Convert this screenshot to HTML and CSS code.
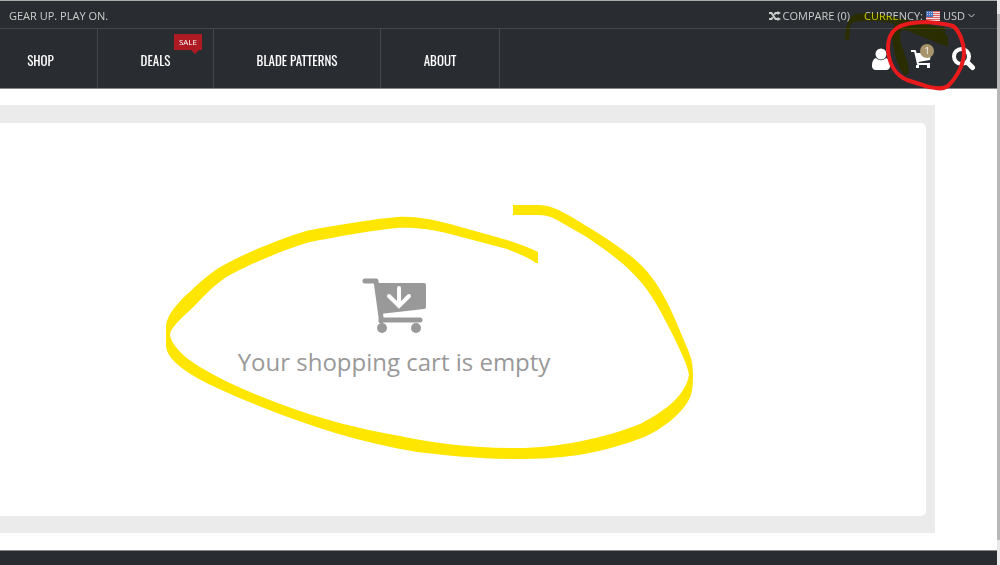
FILE: index.html
```html
<!DOCTYPE html>
<html lang="en">
<head>
  <meta charset="UTF-8">
  <meta name="viewport" content="width=device-width, initial-scale=1.0">
  <title>Shopping Cart</title>
  <link rel="stylesheet" href="styles.css">
</head>
<body>
  <div class="page">
    <header class="header">
      <div class="topbar">
        <span>GEAR UP. PLAY ON.</span>
        <div class="topbar-right">
          <a href="#" class="compare">
            <svg width="12" height="10" viewBox="0 0 12 10" fill="none" stroke="currentColor" stroke-width="2">
              <path d="M0 2h2.5l4 6H9M0 8h2.5l1.2-1.8M5.3 3.8L6.5 2H9"/>
              <path d="M8.5 0L12 2 8.500 4zM8.500 6L12 8l-3.500 2z" fill="currentColor" stroke="none"/>
            </svg>
            COMPARE (0)
          </a>
          <button type="button" class="currency">
            CURRENCY:
            <svg class="flag" width="14" height="10" viewBox="0 0 14 10">
              <path fill="#f2dede" d="M0 0h14v10H0z"/>
              <path stroke="#d8625f" d="M0 .5h14M0 2.500h14M0 4.500h14M0 6.500h14M0 8.500h14"/>
              <path fill="#4a72b8" d="M0 0h7v6H0z"/>
              <path stroke="#b9cbe8" stroke-dasharray="1 1" d="M1 1.500h5M1 3.500h5"/>
            </svg>
            USD
            <svg width="7" height="5" viewBox="0 0 7 5" fill="none" stroke="currentColor"><path d="M.5 1l3 3 3-3"/></svg>
          </button>
        </div>
      </div>

      <div class="navbar">
        <nav class="nav">
          <a href="#">SHOP</a>
          <a href="#">DEALS<span class="sale">SALE</span></a>
          <a href="#">BLADE PATTERNS</a>
          <a href="#">ABOUT</a>
        </nav>
        <div class="tools">
          <button type="button" aria-label="Account">
            <svg width="18" height="22" viewBox="0 0 18 22" fill="#fff">
              <path d="M4 10C1 11 0 14 0 18c0 2 1 4 4 4h10c3 0 4-2 4-4 0-4-1-7-4-8-3 3-7 3-10 0z"/>
              <circle cx="9" cy="6" r="5.500"/>
            </svg>
          </button>
          <button type="button" class="cart" aria-label="Cart">
            <svg width="20" height="20" viewBox="0 0 20 20">
              <path fill="none" stroke="#fff" stroke-width="2" stroke-linejoin="round" d="M0 2h4l3 13h12"/>
              <path fill="#fff" d="M4.500 4H20l-1 7-12 2z"/>
              <path fill="#fff" d="M5 16h3v3H5zM16 16h3v3h-3z"/>
            </svg>
            <span class="badge">1</span>
          </button>
          <button type="button" aria-label="Search">
            <svg width="24" height="24" viewBox="0 0 24 24" fill="none" stroke="#fff">
              <circle cx="9.500" cy="9.500" r="7.500" stroke-width="4"/>
              <path stroke-width="5" stroke-linecap="round" d="M16 16l4.500 4.500"/>
            </svg>
          </button>
        </div>
      </div>

      <svg class="marker" width="157" height="100" viewBox="840 0 157 100">
        <path fill="#ff0" d="M845 40c0-10 2-19 7-24 6-4 18-3 28-2l65 14v6l3 2v11l-45-18c-5 4-3 13 1 23 2 7 5 14 5 20l-3 4c-8-6-12-23-14-39 0-6 1-10 3-13-17-4-34-4-43-1-3 4-2 11-3 17z"/>
      </svg>
      <svg class="circle" width="157" height="100" viewBox="840 0 157 100">
        <path fill="none" stroke="#e81a1c" stroke-width="4" d="M888 50C887 30 898 22 927 22C937 23 947 24 953 26C960 31 964 44 964 53C964 63 958 76 948 86C942 90 935 88 929 87L907 80C895 75 889 63 888 50z"/>
      </svg>
    </header>

    <main class="panel">
      <div class="empty-cart">
        <svg width="66" height="56" viewBox="0 0 66 56">
          <path fill="none" stroke="#999" stroke-width="5" stroke-linecap="round" stroke-linejoin="round" d="M4 3h11l5 36v4M21 42h38"/>
          <path fill="#999" d="M15 5h48q2 0 2 2v22q0 2-2 2l-44 5z"/>
          <circle cx="21" cy="50" r="5" fill="#999"/>
          <circle cx="55" cy="50" r="5" fill="#999"/>
          <path fill="none" stroke="#fff" stroke-width="4" stroke-linecap="round" d="M38 10v18M28 18l10 10 10-10"/>
        </svg>
        <p>Your shopping cart is empty</p>
        <svg class="highlight" width="540" height="265" viewBox="160 200 540 265">
          <path fill="#ffe600" d="M513 205H538C552 205 560 211 570 216C590 228 622 247 640 264C663 286 675 319 686 345C692 359 693 364 693 375C693 392 692 400 677 415C668 424 650 436 636 440C595 455 560 459 517 459C480 459 450 456 417 452C350 441 283 418 217 388C185 373 166 359 166 345V325C168 314 175 307 183 298C194 288 205 277 217 269C240 255 277 240 306 231C330 226 374 219 397 217C415 216 430 219 450 224L507 240C519 244 530 248 538 252V263H536C530 258 519 254 507 249L450 234C430 229 415 227 397 228C374 230 330 238 310 242C285 249 243 267 225 278C210 288 200 301 187 313C176 323 170 330 170 335C171 344 182 356 200 367C225 382 255 395 283 405C320 419 360 429 400 436C438 444 475 448 517 448C558 448 605 438 640 424C655 416 685 400 689 375C688 363 668 325 658 307C640 274 615 256 585 236L557 220C550 216 545 215 535 215H513z"/>
        </svg>
      </div>
    </main>

    <footer class="footer"></footer>
  </div>
  <div class="scrollbar"></div>
</body>
</html>
```
FILE: styles.css
```css
:root {
  --dark: #292d31;
  --line: #43474b;
  --grey: #999;
  --font: "Open Sans", sans-serif;
}

* {
  box-sizing: border-box;
  margin: 0;
  padding: 0;
}

body {
  display: flex;
  min-height: 100vh;
  overflow: hidden;
  font-family: var(--font);
  background: #fff;
}

svg {
  display: block;
}

a {
  color: inherit;
  text-decoration: none;
}

button {
  border: none;
  background: none;
  color: inherit;
  font: inherit;
  cursor: pointer;
}

.page {
  flex: 1;
  display: flex;
  flex-direction: column;
  min-width: 0;
  overflow: hidden;
}

.header {
  position: relative;
  isolation: isolate;
  background: var(--dark);
  color: #ccc;
  border-top: 1px solid #aaa;
  border-bottom: 1px solid #888;
}

.topbar {
  display: flex;
  justify-content: space-between;
  align-items: center;
  height: 28px;
  padding: 2px 22px 0 9px;
  font-size: 11px;
  border-bottom: 1px solid var(--line);
}

.topbar-right,
.compare,
.currency {
  display: flex;
  align-items: center;
}

.topbar-right {
  gap: 14px;
}

.compare {
  gap: 2px;
}

.currency {
  gap: 3px;
}

.navbar {
  display: flex;
  justify-content: space-between;
  height: 59px;
}

.nav {
  display: grid;
  grid-template-columns: 114px 116px 167px 119px;
  margin-left: -16px;
}

.nav a {
  position: relative;
  display: flex;
  align-items: center;
  justify-content: center;
  padding-top: 3px;
  border-right: 1px solid var(--line);
  color: #fff;
  font-family: Oswald, "Roboto Condensed", sans-serif;
  font-size: 13px;
  white-space: nowrap;
}

.sale {
  position: absolute;
  top: 5px;
  right: 11px;
  padding: 0 5px;
  background: #ad1a22;
  font-family: var(--font);
  font-size: 8px;
  line-height: 16px;
}

.sale::after {
  content: "";
  position: absolute;
  top: 16px;
  right: 3px;
  border: 4px solid transparent;
  border-top-color: #ad1a22;
  border-bottom: 0;
}

.tools {
  display: flex;
  align-items: center;
  gap: 21px;
  padding-right: 21px;
}

.cart {
  position: relative;
}

.badge {
  position: absolute;
  top: -5px;
  right: -3px;
  width: 14px;
  height: 14px;
  border-radius: 50%;
  background: #a8946a;
  color: #fff;
  font-size: 9px;
  line-height: 14px;
}

.marker,
.circle {
  position: absolute;
  top: -1px;
  right: 0;
  pointer-events: none;
}

.marker {
  mix-blend-mode: multiply;
}

.panel {
  margin: 16px 62px 17px -147px;
  padding: 18px 9px 17px;
  background: #ecebeb;
}

.empty-cart {
  position: relative;
  display: flex;
  flex-direction: column;
  align-items: center;
  gap: 10px;
  padding: 155px 0 136px;
  border-radius: 5px;
  background: #fff;
  color: var(--grey);
}

.empty-cart p {
  font-size: 24px;
  line-height: 36px;
}

.highlight {
  position: absolute;
  top: 77px;
  left: calc(50% - 234px);
  pointer-events: none;
}

.footer {
  flex: 1;
  min-height: 15px;
  background: var(--dark);
  border-top: 1px solid #888;
}

.scrollbar {
  width: 3px;
  background: #b8b8b8;
  border-top: 14px solid #e8e8e8;
  border-bottom: 25px solid #e8e8e8;
}
```
